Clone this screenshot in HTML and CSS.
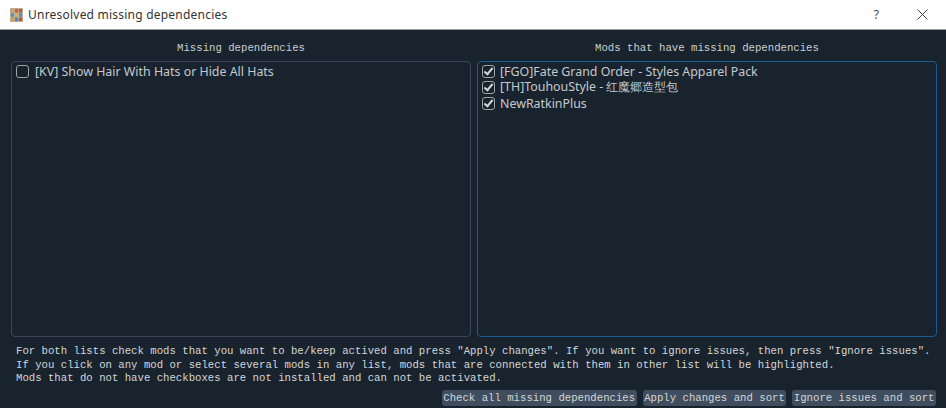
FILE: index.html
```html
<!DOCTYPE html>
<html>
<head>
<meta charset="utf-8">
<title>Unresolved missing dependencies</title>
<link rel="stylesheet" href="styles.css">
</head>
<body>
<div class="titlebar">
  <svg class="app-icon" width="13" height="14" viewBox="0 0 13 14">
    <rect x="0" y="0" width="13" height="14" fill="#b9ad98"/>
    <rect x="1" y="1" width="3" height="3.5" fill="#d9a03a"/>
    <rect x="5" y="1" width="3" height="3.5" fill="#c8603a"/>
    <rect x="9" y="1" width="3" height="3.5" fill="#c8503a"/>
    <rect x="1" y="5.2" width="3" height="3.5" fill="#5a90c8"/>
    <rect x="5" y="5.2" width="3" height="3.5" fill="#e0b040"/>
    <rect x="9" y="5.2" width="3" height="3.5" fill="#5a90c8"/>
    <rect x="1" y="9.5" width="3" height="3.5" fill="#e0a030"/>
    <rect x="5" y="9.5" width="3" height="3.5" fill="#4a86c8"/>
    <rect x="9" y="9.5" width="3" height="3.5" fill="#c8503a"/>
  </svg>
  <span class="title">Unresolved missing dependencies</span>
  <span class="help">?</span>
  <svg class="close" width="11" height="11" viewBox="0 0 11 11">
    <path d="M0.5 0.5L10.5 10.5M10.5 0.5L0.5 10.5" stroke="#444" stroke-width="1" fill="none"/>
  </svg>
</div>
<div class="dialog">
  <div class="columns">
    <div class="column">
      <div class="heading">Missing dependencies</div>
      <div class="list">
        <label class="row"><input type="checkbox"><span>[KV] Show Hair With Hats or Hide All Hats</span></label>
      </div>
    </div>
    <div class="column">
      <div class="heading">Mods that have missing dependencies</div>
      <div class="list focused">
        <label class="row"><input type="checkbox" checked><span>[FGO]Fate Grand Order - Styles Apparel Pack</span></label>
        <label class="row"><input type="checkbox" checked><span>[TH]TouhouStyle - 红魔郷造型包</span></label>
        <label class="row"><input type="checkbox" checked><span>NewRatkinPlus</span></label>
      </div>
    </div>
  </div>
  <div class="info">
    For both lists check mods that you want to be/keep actived and press "Apply changes". If you want to ignore issues, then press "Ignore issues".<br>
    If you click on any mod or select several mods in any list, mods that are connected with them in other list will be highlighted.<br>
    Mods that do not have checkboxes are not installed and can not be activated.
  </div>
  <div class="buttons">
    <button>Check all missing dependencies</button>
    <button>Apply changes and sort</button>
    <button>Ignore issues and sort</button>
  </div>
</div>
</body>
</html>
```
FILE: styles.css
```css
html, body {
	margin:0;
	padding:0;
	height:100%;
}
body {
	width:946px;
	height:408px;
	overflow:hidden;
	background-color:#19232d;
	display:flex;
	flex-direction:column;
}
.titlebar {
	height:29px;
	flex:none;
	display:flex;
	align-items:center;
	background-color:#fff;
	border-bottom:1px solid #9a9a9a;
	padding:0 18px 0 10px;
	font-family:"Noto Sans", "Open Sans", sans-serif;
	font-size:12px;
	color:#333;
}
.app-icon {
	margin-right:5px;
}
.title {
	flex:1;
	letter-spacing:0.22px;
}
.help {
	margin-right:38px;
	font-size:12px;
	color:#444;
}
.dialog {
	flex:1;
	display:flex;
	flex-direction:column;
	min-height:0;
	padding:11px 9px 2px 11px;
	font-family:"Liberation Mono", "DejaVu Sans Mono", monospace;
	font-size:10.67px;
	color:#d3d6d9;
}
.columns {
	flex:1;
	display:flex;
	gap:6px;
	min-height:0;
}
.column {
	flex:1;
	display:flex;
	flex-direction:column;
	min-width:0;
}
.heading {
	height:20px;
	line-height:14px;
	text-align:center;
	color:#c9cdd0;
}
.list {
	flex:1;
	box-sizing:border-box;
	border:1px solid #3a4754;
	border-radius:4px;
	padding:1px 4px;
	font-family:"Noto Sans", "Open Sans", sans-serif;
	font-size:12.4px;
	color:#c4c9cd;
}
.list.focused {
	border-color:#1d5b94;
}
.row {
	display:flex;
	align-items:center;
	height:16px;
	gap:6px;
}
.focused .row {
	gap:5px;
}
.row input {
	appearance:none;
	margin:0;
	width:13px;
	height:13px;
	box-sizing:border-box;
	border:1px solid #9ea4a9;
	border-radius:3px;
	background:transparent;
	position:relative;
}
.row input:checked::after {
	content:"";
	position:absolute;
	left:3px;
	top:0px;
	width:3px;
	height:7px;
	border:solid #d5d8da;
	border-width:0 2px 2px 0;
	transform:rotate(40deg);
}
.info {
	flex:none;
	padding:8px 0 0 5px;
	line-height:13.6px;
	white-space:nowrap;
}
.buttons {
	flex:none;
	display:flex;
	justify-content:flex-end;
	gap:6px;
	margin-top:4px;
	padding-right:1px;
}
.buttons button {
	font:inherit;
	color:#d3d6d9;
	height:16px;
	line-height:14px;
	padding:0 1.5px;
	border:0;
	border-radius:3px;
	background-color:#3f4d5e;
}
```
